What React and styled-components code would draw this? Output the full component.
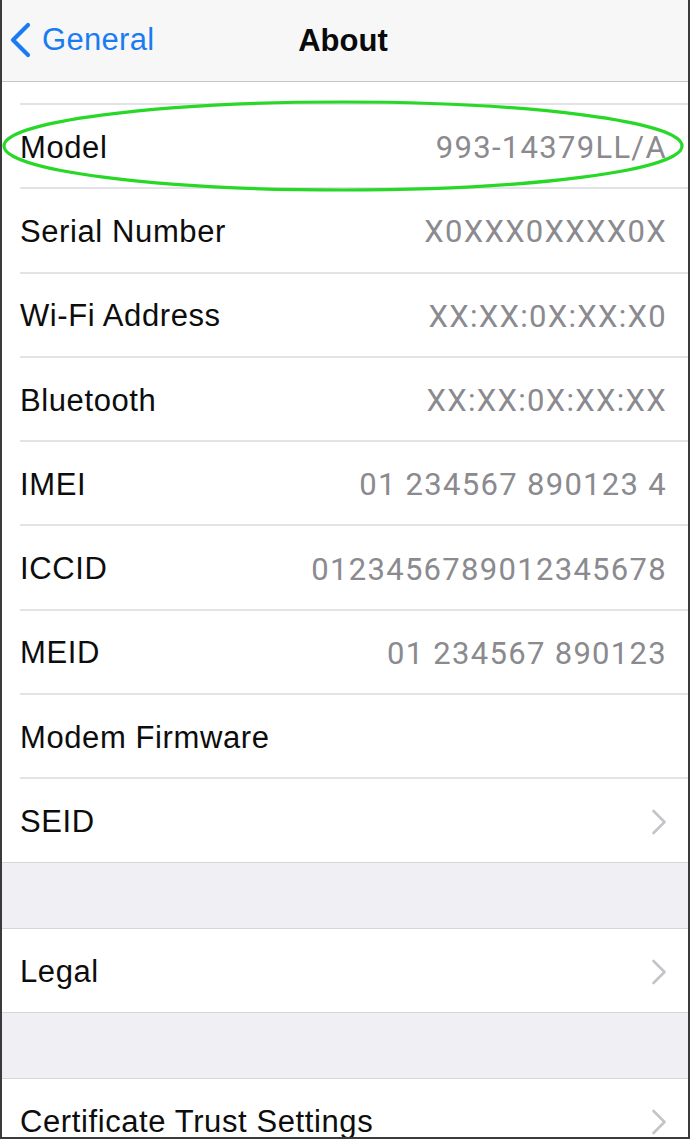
import React from 'react';
import styled, { createGlobalStyle } from 'styled-components';

const GlobalStyle = createGlobalStyle`
  html, body {
    margin: 0;
    padding: 0;
    background: #ffffff;
  }
  body {
    font-family: "Liberation Sans", Arial, sans-serif;
    -webkit-font-smoothing: antialiased;
  }
`;

const Screen = styled.div`
  position: relative;
  width: 690px;
  height: 1139px;
  box-sizing: border-box;
  overflow: hidden;
  background: #efeff4;
  border-left: 2px solid #3a3a3a;
  border-right: 2px solid #3a3a3a;
  border-bottom: 2px solid #3a3a3a;
  display: flex;
  flex-direction: column;
`;

const NavBar = styled.header`
  position: relative;
  height: 82px;
  flex-shrink: 0;
  box-sizing: border-box;
  background: #f7f7f7;
  border-bottom: 1px solid #c6c6ca;
  display: flex;
  align-items: center;
  justify-content: center;
`;

const BackButton = styled.button`
  position: absolute;
  left: 6px;
  top: 0;
  bottom: 1px;
  display: flex;
  align-items: center;
  gap: 10px;
  padding: 0;
  border: 0;
  background: none;
  color: #1b7cf2;
  font-family: inherit;
  font-size: 31px;
  letter-spacing: 0.3px;
  cursor: pointer;
`;

const NavTitle = styled.h1`
  margin: 0 0 0 -4px;
  font-size: 31px;
  font-weight: 700;
  color: #0a0a0a;
`;

const Section = styled.section`
  background: #ffffff;
  border-top: ${({ $topLine }) => ($topLine ? '1px solid #d6d6da' : '0')};
  border-bottom: 1px solid #d6d6da;
  flex-shrink: 0;
`;

const Stub = styled.div`
  height: 21px;
`;

const Row = styled.div`
  height: ${({ $height }) => $height}px;
  box-sizing: border-box;
  margin-left: 18px;
  padding: 3px 21px 0 0;
  border-top: ${({ $line }) => ($line ? '2px solid #e3e3e7' : '0')};
  display: flex;
  align-items: center;
  justify-content: space-between;
  font-size: 31px;
`;

const Label = styled.span`
  color: #0d0d0d;
  letter-spacing: 0.6px;
  white-space: nowrap;
`;

const Value = styled.span`
  color: #8a8a8f;
  font-family: Roboto, "Liberation Sans", sans-serif;
  letter-spacing: 1.3px;
  white-space: nowrap;
`;

const Gap = styled.div`
  height: 65px;
  flex-shrink: 0;
`;

const Highlight = styled.svg`
  position: absolute;
  left: 0;
  top: 99px;
  pointer-events: none;
`;

const BackChevron = () => (
  <svg width="24" height="36" viewBox="0 0 24 36">
    <path
      d="M20 3 L5 18 L20 33"
      fill="none"
      stroke="currentColor"
      strokeWidth="4.2"
      strokeLinecap="round"
      strokeLinejoin="round"
    />
  </svg>
);

const Disclosure = () => (
  <svg width="16" height="26" viewBox="0 0 16 26">
    <path
      d="M2.5 2 L13.5 13 L2.5 24"
      fill="none"
      stroke="#c4c4c9"
      strokeWidth="2.6"
      strokeLinecap="round"
      strokeLinejoin="round"
    />
  </svg>
);

const details = [
  { label: 'Model', value: '993-14379LL/A' },
  { label: 'Serial Number', value: 'X0XXX0XXXX0X' },
  { label: 'Wi-Fi Address', value: 'XX:XX:0X:XX:X0' },
  { label: 'Bluetooth', value: 'XX:XX:0X:XX:XX' },
  { label: 'IMEI', value: '01 234567 890123 4' },
  { label: 'ICCID', value: '0123456789012345678' },
  { label: 'MEID', value: '01 234567 890123' },
  { label: 'Modem Firmware', value: '' },
  { label: 'SEID', link: true },
];

const App = () => (
  <>
    <GlobalStyle />
    <Screen>
      <NavBar>
        <BackButton type="button">
          <BackChevron />
          <span>General</span>
        </BackButton>
        <NavTitle>About</NavTitle>
      </NavBar>

      <Section>
        <Stub />
        {details.map(({ label, value, link }) => (
          <Row key={label} $line $height={84.3}>
            <Label>{label}</Label>
            {link ? <Disclosure /> : <Value>{value}</Value>}
          </Row>
        ))}
      </Section>

      <Gap />

      <Section $topLine>
        <Row $height={83}>
          <Label>Legal</Label>
          <Disclosure />
        </Row>
      </Section>

      <Gap />

      <Section $topLine>
        <Row $height={83}>
          <Label>Certificate Trust Settings</Label>
          <Disclosure />
        </Row>
      </Section>

      <Highlight width="688" height="94" viewBox="0 0 688 94">
        <ellipse
          cx="341"
          cy="47"
          rx="339"
          ry="44"
          fill="none"
          stroke="#27d827"
          strokeWidth="3.2"
        />
      </Highlight>
    </Screen>
  </>
);

export default App;
